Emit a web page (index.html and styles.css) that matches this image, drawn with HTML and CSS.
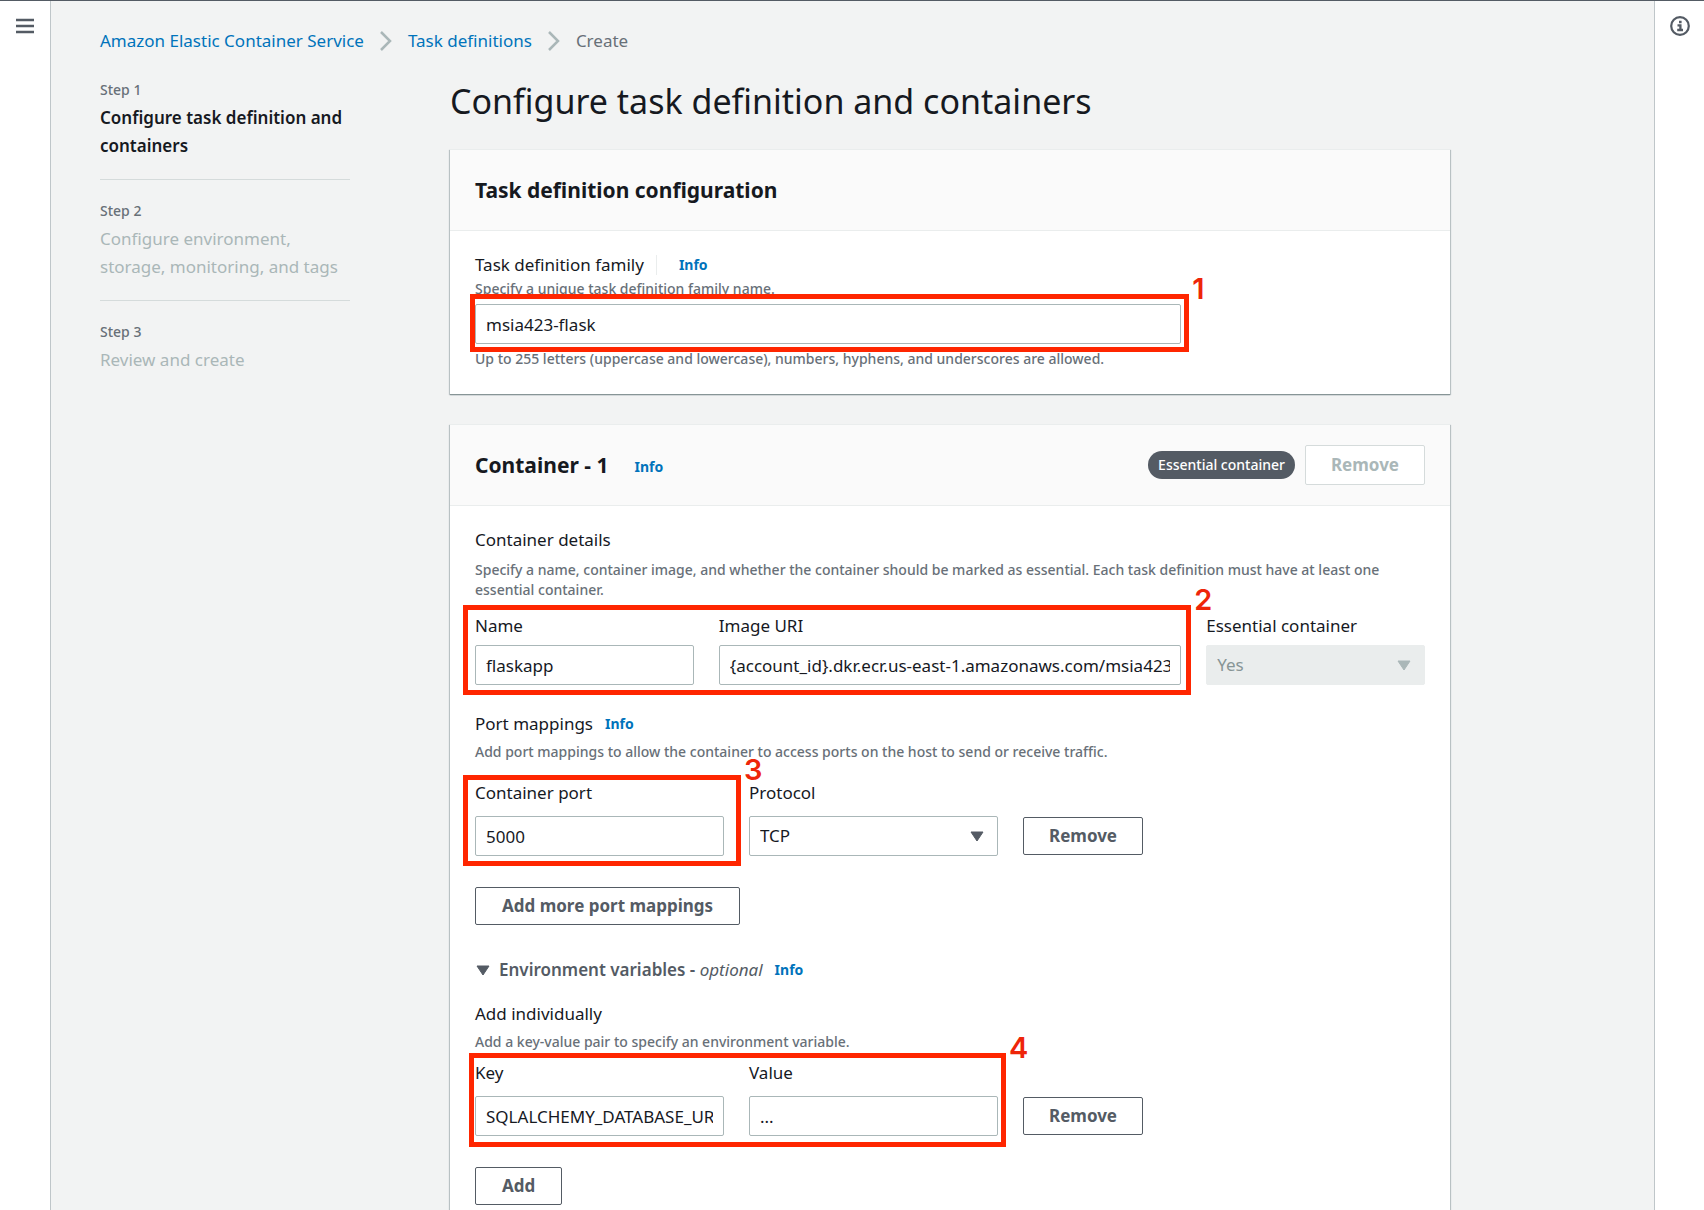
FILE: index.html
```html
<!DOCTYPE html>
<html lang="en">
<head>
  <meta charset="utf-8">
  <meta name="viewport" content="width=device-width, initial-scale=1">
  <title>Create task definition</title>
  <link rel="stylesheet" href="styles.css">
</head>
<body>
  <div class="shell">
    <aside class="rail rail-left">
      <button class="icon-button" type="button" aria-label="Open navigation">
        <svg width="20" height="20" viewBox="0 0 20 20" fill="none" stroke="currentColor" stroke-width="2.500"><path d="M1 4h18M1 10h18M1 16h18"/></svg>
      </button>
    </aside>

    <main class="main">
      <nav class="breadcrumbs" aria-label="Breadcrumbs">
        <a href="#">Amazon Elastic Container Service</a>
        <svg class="chevron" width="12" height="20" viewBox="0 0 12 20" fill="none" stroke="currentColor" stroke-width="2.500"><path d="M1 1l9 9-9 9"/></svg>
        <a href="#">Task definitions</a>
        <svg class="chevron" width="12" height="20" viewBox="0 0 12 20" fill="none" stroke="currentColor" stroke-width="2.500"><path d="M1 1l9 9-9 9"/></svg>
        <span>Create</span>
      </nav>

      <div class="wizard">
        <ol class="steps">
          <li class="step step-active"><span class="step-number">Step 1</span><span class="step-title">Configure task definition and containers</span></li>
          <li class="step"><span class="step-number">Step 2</span><span class="step-title">Configure environment, storage, monitoring, and tags</span></li>
          <li class="step"><span class="step-number">Step 3</span><span class="step-title">Review and create</span></li>
        </ol>

        <form class="content">
          <h1>Configure task definition and containers</h1>

          <section class="card">
            <header class="card-header"><h2>Task definition configuration</h2></header>
            <div class="card-body">
              <div class="label-line">
                <label for="family">Task definition family</label>
                <a class="info info-divided" href="#">Info</a>
              </div>
              <p class="hint">Specify a unique task definition family name.</p>
              <div class="quarters family-row">
                <div class="three-quarters callout-anchor">
                  <input id="family" type="text" value="msia423-flask">
                  <div class="callout callout-family"><span class="callout-number">1</span></div>
                </div>
              </div>
              <p class="hint">Up to 255 letters (uppercase and lowercase), numbers, hyphens, and underscores are allowed.</p>
            </div>
          </section>

          <section class="card">
            <header class="card-header">
              <h2>Container - 1</h2>
              <a class="info info-heading" href="#">Info</a>
              <span class="badge">Essential container</span>
              <button class="button button-header" type="button" disabled>Remove</button>
            </header>
            <div class="card-body">
              <h3>Container details</h3>
              <p class="hint details-hint">Specify a name, container image, and whether the container should be marked as essential. Each task definition must have at least one essential container.</p>
              <div class="quarters details-row">
                <div class="three-quarters details-group callout-anchor">
                  <div class="field">
                    <label for="name">Name</label>
                    <input id="name" type="text" value="flaskapp">
                  </div>
                  <div class="field field-uri">
                    <label for="uri">Image URI</label>
                    <input id="uri" type="text" value="{account_id}.dkr.ecr.us-east-1.amazonaws.com/msia423-flask">
                  </div>
                  <div class="callout callout-details"><span class="callout-number">2</span></div>
                </div>
                <div class="field">
                  <label for="essential">Essential container</label>
                  <div class="select">
                    <select id="essential" disabled><option>Yes</option></select>
                    <svg class="caret" width="14" height="11" viewBox="0 0 14 11" fill="currentColor" stroke="currentColor" stroke-width="1" stroke-linejoin="round"><path d="M1 1h12L7 10z"/></svg>
                  </div>
                </div>
              </div>

              <div class="label-line section-start">
                <h3>Port mappings</h3>
                <a class="info" href="#">Info</a>
              </div>
              <p class="hint section-hint">Add port mappings to allow the container to access ports on the host to send or receive traffic.</p>
              <div class="attributes ports-row">
                <div class="field field-roomy callout-anchor">
                  <label for="port">Container port</label>
                  <input id="port" type="text" value="5000">
                  <div class="callout callout-port"><span class="callout-number">3</span></div>
                </div>
                <div class="field field-roomy">
                  <label for="protocol">Protocol</label>
                  <div class="select">
                    <select id="protocol"><option>TCP</option><option>UDP</option></select>
                    <svg class="caret" width="14" height="11" viewBox="0 0 14 11" fill="currentColor" stroke="currentColor" stroke-width="1" stroke-linejoin="round"><path d="M1 1h12L7 10z"/></svg>
                  </div>
                </div>
                <button class="button" type="button">Remove</button>
              </div>
              <button class="button add-button" type="button">Add more port mappings</button>

              <div class="expander">
                <button class="expander-toggle" type="button" aria-expanded="true">
                  <svg width="14" height="11" viewBox="0 0 14 11" fill="currentColor" stroke="currentColor" stroke-width="1" stroke-linejoin="round"><path d="M1 1h12L7 10z"/></svg>
                  <span>Environment variables - <em>optional</em></span>
                </button>
                <a class="info" href="#">Info</a>
              </div>
              <h3 class="variables-title">Add individually</h3>
              <p class="hint section-hint">Add a key-value pair to specify an environment variable.</p>
              <div class="attributes variables-row">
                <div class="pair callout-anchor">
                  <div class="field field-roomy">
                    <label for="key">Key</label>
                    <input id="key" type="text" value="SQLALCHEMY_DATABASE_URI">
                  </div>
                  <div class="field field-roomy">
                    <label for="value">Value</label>
                    <input id="value" type="text" value="...">
                  </div>
                  <div class="callout callout-variables"><span class="callout-number">4</span></div>
                </div>
                <button class="button" type="button">Remove</button>
              </div>
              <button class="button add-button" type="button">Add</button>
            </div>
          </section>
        </form>
      </div>
    </main>

    <aside class="rail rail-right">
      <button class="icon-button" type="button" aria-label="Open help">
        <svg width="20" height="20" viewBox="0 0 20 20" fill="none" stroke="currentColor" stroke-width="2.200"><circle cx="10" cy="10" r="8.800"/><path d="M9 6h2.600M7.500 9.300h2.900v4.500M7.200 14h5.800" stroke-width="2.300"/></svg>
      </button>
    </aside>
  </div>
</body>
</html>
```
FILE: styles.css
```css
*, *::before, *::after {
  box-sizing: border-box;
}

body {
  margin: 0;
  color: #16191f;
  background: #f2f3f3;
  font-family: "Noto Sans", "Open Sans", sans-serif;
  font-size: 17px;
  line-height: 28px;
}

h1, h2, h3, p, ol {
  margin: 0;
  padding: 0;
}

a {
  color: #0073bb;
  text-decoration: none;
}

input, select, button {
  font: inherit;
  color: inherit;
}

.shell {
  display: grid;
  grid-template-columns: 51px minmax(0, 1fr) 50px;
  height: 100vh;
  border-top: 1px solid #545b64;
}

.rail {
  display: flex;
  justify-content: center;
  align-items: flex-start;
  padding-top: 15px;
  background: #fff;
  color: #545b64;
}

.rail-left {
  border-right: 1px solid #bfc6c9;
}

.rail-right {
  border-left: 1px solid #bfc6c9;
}

.icon-button {
  display: flex;
  padding: 0;
  border: 0;
  background: none;
}

.main {
  padding: 26px 49px 0;
  overflow-y: auto;
  scrollbar-width: none;
}

.breadcrumbs {
  display: flex;
  align-items: center;
  gap: 16px;
  color: #687078;
}

.chevron {
  color: #aab7b8;
}

.wizard {
  display: grid;
  grid-template-columns: 250px minmax(0, 1000px);
  gap: 100px;
}

.steps {
  padding-top: 25px;
  list-style: none;
}

.step {
  padding-bottom: 19px;
  margin-bottom: 21px;
  border-bottom: 1px solid #d5dbdb;
  color: #aab7b8;
}

.step:last-child {
  border-bottom: 0;
}

.step-number {
  display: block;
  font-size: 14px;
  font-weight: 500;
  line-height: 20px;
  padding-bottom: 4px;
  color: #687078;
}

.step-title {
  display: block;
}

.step-active .step-title {
  font-weight: 600;
  color: #16191f;
}

.content {
  padding-bottom: 25px;
}

h1 {
  padding: 22px 0 24px;
  font-size: 34px;
  font-weight: 400;
  line-height: 48px;
}

.card {
  margin-bottom: 30px;
  background: #fff;
  box-shadow: 0 1px 1px 0 #879596, 1px 1px 1px 0 #c3cbcd, -1px 1px 1px 0 #c3cbcd;
}

.card-header {
  display: flex;
  align-items: center;
  min-height: 82px;
  padding: 0 25px 1px;
  background: #fafafa;
  border-top: 1px solid #eaeded;
  border-bottom: 1px solid #eaeded;
}

h2 {
  font-size: 21px;
  font-weight: 700;
}

h3 {
  font-size: 17px;
  font-weight: 400;
}

.card-body {
  padding: 20px 25px 25px;
}

.label-line {
  display: flex;
  align-items: center;
  gap: 12px;
}

.info {
  font-size: 14px;
  font-weight: 700;
}

.info-divided {
  padding-left: 22px;
  border-left: 1px solid #eaeded;
  line-height: 20px;
}

.info-heading {
  margin-left: 26px;
  padding-top: 4px;
}

.hint {
  font-size: 14px;
  font-weight: 500;
  line-height: 20px;
  color: #687078;
}

.details-hint {
  margin-top: 6px;
}

.section-hint {
  margin-top: 4px;
}

.badge {
  margin-left: auto;
  padding: 0 10px;
  border-radius: 14px;
  background: #545b64;
  color: #fff;
  font-size: 14px;
  font-weight: 500;
}

.button {
  height: 38px;
  padding: 0 25px;
  border: 1px solid #545b64;
  border-radius: 2px;
  background: #fff;
  color: #545b64;
  font-weight: 700;
  line-height: 36px;
}

.button:disabled {
  border-color: #d5dbdb;
  color: #aab7b8;
}

.button-header {
  height: 40px;
  margin-left: 10px;
}

.add-button {
  margin-top: 31px;
  padding: 0 26px;
}

input, select {
  display: block;
  width: 100%;
  height: 40px;
  padding: 0 10px;
  border: 1px solid #aab7b8;
  border-radius: 2px;
  background: #fff;
}

.select {
  position: relative;
}

select {
  appearance: none;
}

select:disabled {
  border-color: #eaeded;
  background: #eaeded;
  color: #879596;
  opacity: 1;
}

.caret {
  position: absolute;
  top: 15px;
  right: 14px;
  color: #545b64;
  pointer-events: none;
}

select:disabled + .caret {
  color: #aab7b8;
}

.field {
  display: flex;
  flex-direction: column;
  gap: 5px;
}

.field-roomy {
  gap: 9px;
}

.quarters {
  display: grid;
  grid-template-columns: repeat(4, minmax(0, 1fr));
  gap: 25px;
}

.three-quarters {
  grid-column: span 3;
}

.details-group {
  display: grid;
  grid-template-columns: subgrid;
}

.field-uri {
  grid-column: span 2;
}

.family-row {
  margin: 5px 0;
}

.details-row {
  margin-top: 12px;
}

.section-start {
  margin-top: 25px;
}

.attributes {
  display: grid;
  grid-template-columns: 249fr 249fr 402fr;
  gap: 25px;
  align-items: end;
  justify-items: stretch;
}

.attributes > .button {
  justify-self: start;
  margin-bottom: 1px;
}

.pair {
  display: grid;
  grid-column: span 2;
  grid-template-columns: subgrid;
}

.ports-row {
  margin-top: 17px;
}

.variables-row {
  margin-top: 7px;
}

.expander {
  display: flex;
  align-items: center;
  gap: 12px;
  margin-top: 31px;
}

.expander-toggle {
  display: flex;
  align-items: center;
  gap: 9px;
  padding: 0 0 0 1px;
  border: 0;
  background: none;
  color: #545b64;
  font-weight: 600;
}

.expander-toggle em {
  font-weight: 400;
}

.variables-title {
  margin-top: 16px;
}

/* Numbered red outlines drawn over the fields to fill in */
.callout-anchor {
  position: relative;
}

.callout {
  position: absolute;
  z-index: 1;
  border: 5px solid #ff2600;
  pointer-events: none;
}

.callout-family {
  inset: -10px -8px -8px -5px;
}

.callout-details {
  inset: -7px -10px -10px -12px;
}

.callout-port {
  inset: -4px -17px -10px -12px;
}

.callout-variables {
  inset: -6px -8px -11px -6px;
}

.callout-number {
  position: absolute;
  left: 100%;
  bottom: 100%;
  margin: 0 0 -4px 8px;
  color: #ee2509;
  font-family: Inter, "Liberation Sans", sans-serif;
  font-size: 29px;
  font-weight: 600;
  line-height: 29px;
}
```
